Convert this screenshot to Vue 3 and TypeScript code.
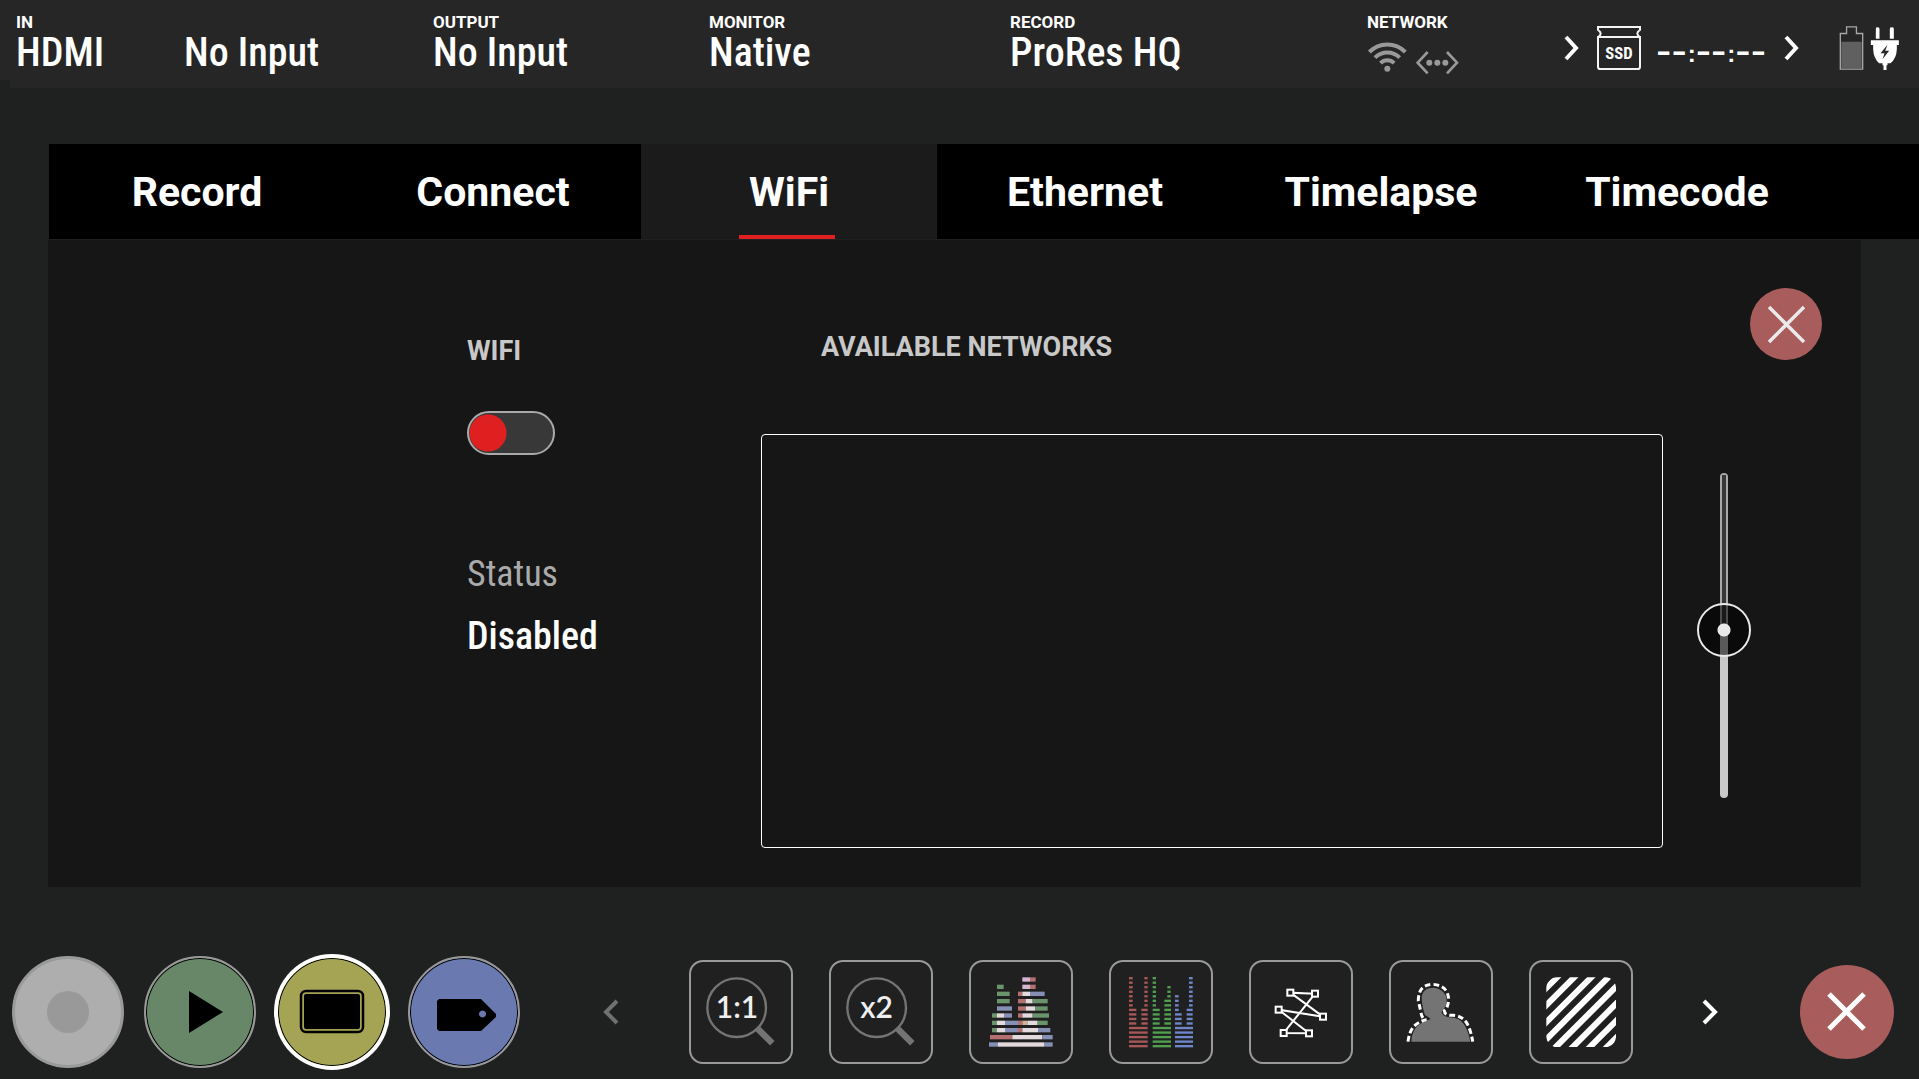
<script setup lang="ts">
import { ref } from 'vue'

interface Readout {
  label: string
  value: string
}
type Segment = [x: number, y: number, width: number, color: string]
type Bar = [x: number, width: number, firstRow: number, lastRow: number, color: string]

const readouts: Readout[] = [
  { label: 'IN', value: 'HDMI' },
  { label: '', value: 'No Input' },
  { label: 'OUTPUT', value: 'No Input' },
  { label: 'MONITOR', value: 'Native' },
  { label: 'RECORD', value: 'ProRes HQ' },
]

const tabs = ['Record', 'Connect', 'WiFi', 'Ethernet', 'Timelapse', 'Timecode']
const activeTab = ref('WiFi')
const wifiOn = ref(false)
const scroll = ref(52)

const G = '#6a946c'
const R = '#b47070'
const W = '#e4dade'
const B = '#8690b6'
const P = '#d4b4d0'
const T = '#d0b494'

const histogram: Segment[] = [
  [217, 112, 23, P], [240, 112, 17, R],
  [141, 134, 20, G], [217, 134, 23, P], [240, 134, 17, R],
  [141, 155, 38, G], [204, 155, 13, R], [217, 155, 23, W], [240, 155, 44, B],
  [141, 177, 38, G], [204, 177, 23, R], [227, 177, 21, W], [248, 177, 45, G],
  [141, 199, 45, B], [204, 199, 23, R], [227, 199, 29, W], [256, 199, 37, G],
  [126, 220, 15, G], [141, 220, 21, W], [162, 220, 24, B], [204, 220, 13, R], [217, 220, 31, W], [248, 220, 49, G],
  [126, 242, 15, G], [141, 242, 24, W], [165, 242, 39, B], [204, 242, 13, R], [217, 242, 15, T], [232, 242, 31, W], [263, 242, 30, G],
  [126, 264, 15, G], [141, 264, 24, W], [165, 264, 39, B], [204, 264, 13, R], [217, 264, 47, W], [264, 264, 37, B],
  [120, 285, 67, R], [187, 285, 90, W], [277, 285, 31, B],
  [117, 307, 27, B], [144, 307, 138, W], [282, 307, 26, B],
]

const parade: Bar[] = [
  [537, 11, 0, 6, '#a85858'], [583, 10, 0, 6, '#a85858'],
  [537, 22, 7, 10, '#a85858'], [574, 19, 7, 10, '#a85858'], [537, 56, 11, 15, '#a85858'],
  [608, 10, 0, 6, '#50a050'], [652, 10, 2, 4, '#50a050'], [643, 20, 5, 10, '#50a050'],
  [608, 21, 7, 10, '#50a050'], [608, 55, 11, 15, '#50a050'],
  [675, 11, 4, 7, '#6f86cc'], [717, 11, 0, 6, '#6f86cc'],
  [675, 20, 8, 10, '#6f86cc'], [710, 18, 7, 10, '#6f86cc'], [675, 54, 11, 15, '#6f86cc'],
]
const paradeRows = parade.flatMap(([x, width, first, last, color]) =>
  Array.from({ length: last - first + 1 }, (_, i) => ({ x, width, color, y: 111 + (first + i) * 13.6 })),
)

const nodes = [[1021, 158], [1095, 161], [986, 209], [1119, 230], [1001, 279], [1077, 280]]
const stripes = Array.from({ length: 8 }, (_, i) => 136 + i * 51.3)
</script>

<template>
  <div class="monitor">
    <header class="top">
      <div v-for="(item, i) in readouts" :key="i" class="readout">
        <span v-if="item.label" class="label">{{ item.label }}</span>
        <span class="value">{{ item.value }}</span>
      </div>
      <div class="readout network">
        <span class="label">NETWORK</span>
        <svg class="links" viewBox="75 91 282 105" fill="none" stroke="#999" aria-hidden="true">
          <g stroke-width="12">
            <path d="M82 124a76 76 0 0 1 108 0" />
            <path d="M99 141a52 52 0 0 1 74 0" />
            <path d="M115.500 157.500a29 29 0 0 1 41 0" />
          </g>
          <circle cx="136" cy="174" r="9" fill="#999" stroke="none" />
          <path d="M257 124l-30 32 30 32M315 124l30 32-30 32" stroke-width="8" />
          <g fill="#999" stroke="none">
            <circle cx="262" cy="156" r="9" /><circle cx="286" cy="156" r="9" /><circle cx="310" cy="156" r="9" />
          </g>
        </svg>
      </div>
      <div class="status">
        <button class="arrow" type="button" aria-label="Next drive">
          <svg viewBox="0 0 16 26"><path d="M2 2l10 11-10 11" /></svg>
        </button>
        <svg class="drive" viewBox="138 45 138 138" fill="none" stroke="#f4f4f4" stroke-width="6" role="img">
          <path d="M144 62V51H270V62M146 62Q158 70 146 80M268 62Q256 70 268 80" />
          <path d="M144 81H270V170Q270 177 263 177H151Q144 177 144 170Z" />
          <text x="207" y="148" class="drive-name">SSD</text>
        </svg>
        <span class="timecode">--<i>:</i>--<i>:</i>--</span>
        <button class="arrow second" type="button" aria-label="Next timecode">
          <svg viewBox="0 0 16 26"><path d="M2 2l10 11-10 11" /></svg>
        </button>
        <svg class="battery" viewBox="865 45 76 138" aria-hidden="true">
          <path d="M869 70H888V50H918V70H937V178H869Z" fill="none" stroke="#a8a8a8" stroke-width="4" />
          <path d="M872 95H934V175H872Z" fill="#606060" />
        </svg>
        <svg class="plug" viewBox="961 45 89 138" aria-hidden="true">
          <path
            fill="#fff"
            d="M978 86V56q0-4 5-4t6 4V86ZM1020 86V56q0-4 6-4t6 4V86ZM963 91H1047V105H1041V118Q1040 145 1022 160H1013V166H1010V180H1001V166H998V160H988Q971 145 970 118V105H963Z"
          />
          <path fill="#262626" d="M1013 104L992 130H1004L998 148L1018 122H1006Z" />
        </svg>
      </div>
    </header>

    <nav class="tabs" aria-label="Settings">
      <button
        v-for="tab in tabs"
        :key="tab"
        type="button"
        class="tab"
        :class="{ active: tab === activeTab }"
        @click="activeTab = tab"
      >
        {{ tab }}
      </button>
    </nav>

    <main class="panel">
      <section class="wifi">
        <label class="heading" for="wifi-switch">WIFI</label>
        <input id="wifi-switch" v-model="wifiOn" type="checkbox" class="switch" />
        <p class="status-label">Status</p>
        <p class="status-value">Disabled</p>
      </section>
      <section class="networks">
        <h2 class="heading">AVAILABLE NETWORKS</h2>
        <div class="list"></div>
      </section>
      <aside class="side">
        <button class="close" type="button" aria-label="Close">
          <svg viewBox="0 0 72 72"><path d="M19 19L54 54M54 19L19 54" /></svg>
        </button>
        <input v-model="scroll" class="scroll" type="range" min="0" max="100" aria-label="Scroll networks" />
      </aside>
    </main>

    <footer class="bottom">
      <div class="modes">
        <button class="mode record" type="button" aria-label="Record">
          <svg viewBox="0 0 112 112"><circle cx="56" cy="56" r="21" fill="#999" /></svg>
        </button>
        <button class="mode play" type="button" aria-label="Play">
          <svg viewBox="0 0 112 112"><path d="M45 35L79 56 45 77Z" /></svg>
        </button>
        <button class="mode screen" type="button" aria-label="Monitor">
          <svg viewBox="0 0 112 112">
            <rect x="25" y="35" width="62" height="41" rx="5" fill="none" stroke="#000" stroke-width="2.500" />
            <rect x="28" y="38" width="56" height="35" rx="2" />
          </svg>
        </button>
        <button class="mode tag" type="button" aria-label="Tag">
          <svg viewBox="0 0 112 112">
            <path fill-rule="evenodd" d="M31 43H73L88 58V61L73 75H31L29 73V45ZM74.500 54.500a3.500 3.500 0 1 0 .1 0Z" />
          </svg>
        </button>
      </div>

      <div class="pager">
        <button class="arrow dim" type="button" aria-label="Previous tools">
          <svg viewBox="0 0 16 26"><path d="M14 2L3 13 14 24" /></svg>
        </button>
        <div class="tools">
          <button class="tool" type="button">
            <svg viewBox="0 0 312 312">
              <g fill="none" stroke="#747474">
                <circle cx="143" cy="143" r="88" stroke-width="7" />
                <path d="M203 203L250 250" stroke-width="19" />
              </g>
              <text x="144" y="174">1:1</text>
            </svg>
          </button>
          <button class="tool" type="button">
            <svg viewBox="0 0 312 312">
              <g fill="none" stroke="#747474">
                <circle cx="143" cy="143" r="88" stroke-width="7" />
                <path d="M203 203L250 250" stroke-width="19" />
              </g>
              <text x="143" y="174">x2</text>
            </svg>
          </button>
          <button class="tool" type="button" aria-label="Histogram">
            <svg viewBox="57 60 312 312">
              <rect v-for="(s, i) in histogram" :key="i" :x="s[0]" :y="s[1]" :width="s[2]" height="13" :fill="s[3]" />
            </svg>
          </button>
          <button class="tool" type="button" aria-label="RGB parade">
            <svg viewBox="477 60 312 312">
              <rect v-for="(r, i) in paradeRows" :key="i" :x="r.x" :y="r.y" :width="r.width" height="7" :fill="r.color" />
            </svg>
          </button>
          <button class="tool" type="button" aria-label="Vectorscope">
            <svg viewBox="897 60 312 312" stroke="#fff">
              <path d="M1095 161L1021 158 1119 230 986 209 1077 280 1001 279Z" fill="none" stroke-width="6" />
              <rect
                v-for="([x, y], i) in nodes"
                :key="i"
                :x="x - 9"
                :y="y - 9"
                width="18"
                height="18"
                fill="#202020"
                stroke-width="6"
              />
            </svg>
          </button>
          <button class="tool" type="button" aria-label="Focus outline">
            <svg viewBox="0 0 312 312">
              <path
                fill="#747474"
                d="M67 245C72 195 95 190 125 177Q118 170 108 165Q99 142 98 112Q100 83 136 83Q172 90 173 122Q174 138 158 155Q158 168 180 172Q212 172 226 194Q239 216 244 245Z"
              />
              <path
                fill="none"
                stroke="#fff"
                stroke-width="9"
                stroke-dasharray="17 9"
                d="M57 245C62 205 78 188 112 179Q98 178 95 153L88 122Q88 73 132 73Q178 76 179 121Q176 145 166 152Q166 167 192 166Q224 168 236 194Q247 216 251 245"
              />
            </svg>
          </button>
          <button class="tool" type="button" aria-label="Zebra">
            <svg viewBox="0 0 312 312">
              <clipPath id="zebra"><rect x="52" y="52" width="209" height="209" rx="32" /></clipPath>
              <g clip-path="url(#zebra)" stroke="#fff" stroke-width="18">
                <line v-for="c in stripes" :key="c" :x1="c - 20" y1="20" :x2="c - 300" y2="300" />
              </g>
            </svg>
          </button>
        </div>
        <button class="arrow" type="button" aria-label="More tools">
          <svg viewBox="0 0 16 26"><path d="M2 2l11 11-11 11" /></svg>
        </button>
      </div>

      <button class="close big" type="button" aria-label="Exit">
        <svg viewBox="0 0 94 94"><path d="M29 29L64 64M64 29L29 64" /></svg>
      </button>
    </footer>
  </div>
</template>

<style>
body {
  margin: 0;
  background: #1f2120;
}
</style>

<style scoped>
.monitor {
  min-height: 100vh;
  color: #fff;
  font-family: Roboto, sans-serif;
  background: #1f2120;
}
.monitor * {
  box-sizing: border-box;
}
button {
  padding: 0;
  border: 0;
  background: none;
  color: inherit;
  font-family: inherit;
  cursor: pointer;
}
svg {
  display: block;
}
.top {
  display: grid;
  grid-template-columns: 168fr 249fr 276fr 301fr 357fr 197fr 336fr;
  height: 88px;
  padding: 12px 19px 0 16px;
  background: linear-gradient(#262626, #262626) 10px 0 no-repeat, linear-gradient(#262626, #262626) 0 0 / 100% 80px no-repeat;
}
.readout {
  display: flex;
  flex-direction: column;
  justify-content: flex-end;
  height: 61px;
  min-width: 0;
  white-space: nowrap;
}
.network {
  justify-content: flex-start;
}
.label {
  font-size: 17px;
  line-height: 21px;
  font-weight: 700;
}
.value {
  font-family: "Roboto Condensed", Roboto, sans-serif;
  font-size: 40px;
  line-height: 40px;
  font-weight: 500;
}
.links {
  flex-shrink: 0;
  width: 94px;
  height: 35px;
  margin-top: 8px;
}
.status {
  display: flex;
  justify-content: flex-end;
  align-items: center;
  height: 72px;
}
.arrow svg {
  width: 16px;
  height: 26px;
  fill: none;
  stroke: #fff;
  stroke-width: 4;
}
.arrow.dim svg {
  stroke: #707070;
}
.drive {
  width: 46px;
  height: 46px;
  margin-left: 16px;
}
.drive-name {
  font-family: "Roboto Condensed", Roboto, sans-serif;
  font-size: 50px;
  font-weight: 700;
  fill: #fff;
  stroke: none;
  text-anchor: middle;
}
.timecode {
  margin-left: 14px;
  padding-top: 8px;
  font-family: "Liberation Sans", sans-serif;
  font-size: 46px;
  line-height: 48px;
  white-space: nowrap;
}
.timecode i {
  margin-left: 1px;
  font-size: 24px;
  font-style: normal;
  font-weight: 700;
  vertical-align: 4px;
}
.second {
  margin-left: 18px;
}
.battery {
  width: 25px;
  height: 46px;
  margin-left: 39px;
}
.plug {
  width: 30px;
  height: 46px;
  margin-left: 6px;
}
.tabs {
  display: grid;
  grid-template-columns: repeat(6, 296fr) 94fr;
  height: 95px;
  margin: 56px 0 1px 49px;
  background: #000;
}
.tab {
  position: relative;
  font-size: 41px;
  line-height: 48px;
  font-weight: 700;
}
.tab.active {
  background: #1b1b1b;
}
.tab.active::after {
  content: "";
  position: absolute;
  left: calc(50% - 50px);
  bottom: 0;
  width: 96px;
  height: 4px;
  background: #e02020;
}
.panel {
  display: grid;
  grid-template-columns: 294fr 902fr 198fr;
  margin: 0 58px 0 48px;
  padding: 48px 0 39px 21.834%;
  background: #161616;
}
.heading {
  display: block;
  margin: 0;
  color: #c8c8c8;
  font-size: 27px;
  line-height: 36px;
  font-weight: 700;
}
.wifi {
  padding-top: 45px;
}
.switch {
  display: block;
  appearance: none;
  width: 88px;
  height: 44px;
  margin: 42px 0 0;
  border: 2px solid #aaa;
  border-radius: 22px;
  background: radial-gradient(circle at 19px 20px, #e02020 18px, transparent 19px), #383838;
}
.switch:checked {
  background: radial-gradient(circle at 65px 20px, #3c3 18px, transparent 19px), #383838;
}
.status-label,
.status-value {
  margin: 97px 0 0;
  font-family: "Roboto Condensed", Roboto, sans-serif;
  font-size: 36px;
  line-height: 44px;
}
.status-label {
  color: #aaa;
}
.status-value {
  margin-top: 18px;
  font-size: 38px;
  font-weight: 500;
}
.networks {
  padding-top: 41px;
}
.networks .heading {
  padding-left: 60px;
}
.list {
  min-height: 414px;
  margin-top: 69px;
  border: 1px solid #fff;
  border-radius: 4px;
}
.side {
  display: flex;
  flex-direction: column;
}
.close {
  width: 72px;
  height: 72px;
  margin-left: 87px;
  border-radius: 50%;
  background: #a85c5c;
}
.close svg {
  width: 100%;
  fill: none;
  stroke: #eaeaea;
  stroke-width: 3.500;
}
.close.big {
  width: 94px;
  height: 94px;
  margin: 0;
}
.close.big svg {
  stroke: #fff;
  stroke-width: 5;
}
.scroll {
  appearance: none;
  writing-mode: vertical-lr;
  direction: rtl;
  width: 54px;
  height: 325px;
  margin: 113px 0 0 34px;
  background: none;
}
.scroll::-webkit-slider-runnable-track {
  width: 8px;
  border-radius: 4px;
  background:
    linear-gradient(#aaa, #aaa) 0 0 / 100% 2px no-repeat,
    linear-gradient(to top, #c8c8c8 52%, transparent 52%),
    linear-gradient(to right, #aaa 2px, #383838 2px 6px, #aaa 6px);
}
.scroll::-webkit-slider-thumb {
  appearance: none;
  width: 54px;
  height: 54px;
  margin-left: -23px;
  border: 2px solid #eaeaea;
  border-radius: 50%;
  background: radial-gradient(circle, #eaeaea 6px, rgba(0, 0, 0, 0.55) 7px);
}
.bottom {
  display: flex;
  align-items: center;
  height: 116px;
  margin-top: 67px;
  padding: 0 25px 0 12px;
}
.modes {
  display: flex;
  gap: 20px;
}
.mode {
  width: 112px;
  height: 112px;
  border: 2px solid #999;
  border-radius: 50%;
  box-shadow: inset 0 0 0 1px #000;
}
.mode svg {
  width: 112px;
  height: 112px;
  margin: -2px;
}
.record {
  border-width: 3px;
  background: #aeaeae;
  box-shadow: none;
}
.record svg {
  margin: -3px;
}
.play {
  background: #678768;
}
.screen {
  border-color: #fff;
  background: #a5a454;
  box-shadow: inset 0 0 0 1px #000, 0 0 0 2px #fff;
}
.tag {
  background: #6a79b0;
}
.pager {
  display: flex;
  flex: 1;
  align-items: center;
  justify-content: space-between;
  margin: 0 82px 0 83px;
}
.tools {
  display: flex;
  gap: 36px;
}
.tool {
  width: 104px;
  height: 104px;
  border: 2px solid #999;
  border-radius: 14px;
  background: #202020;
}
.tool svg {
  width: 104px;
  height: 104px;
  margin: -2px;
}
.tool text {
  fill: #eee;
  font-family: Lato, sans-serif;
  font-size: 90px;
  font-weight: 600;
  text-anchor: middle;
}
</style>
